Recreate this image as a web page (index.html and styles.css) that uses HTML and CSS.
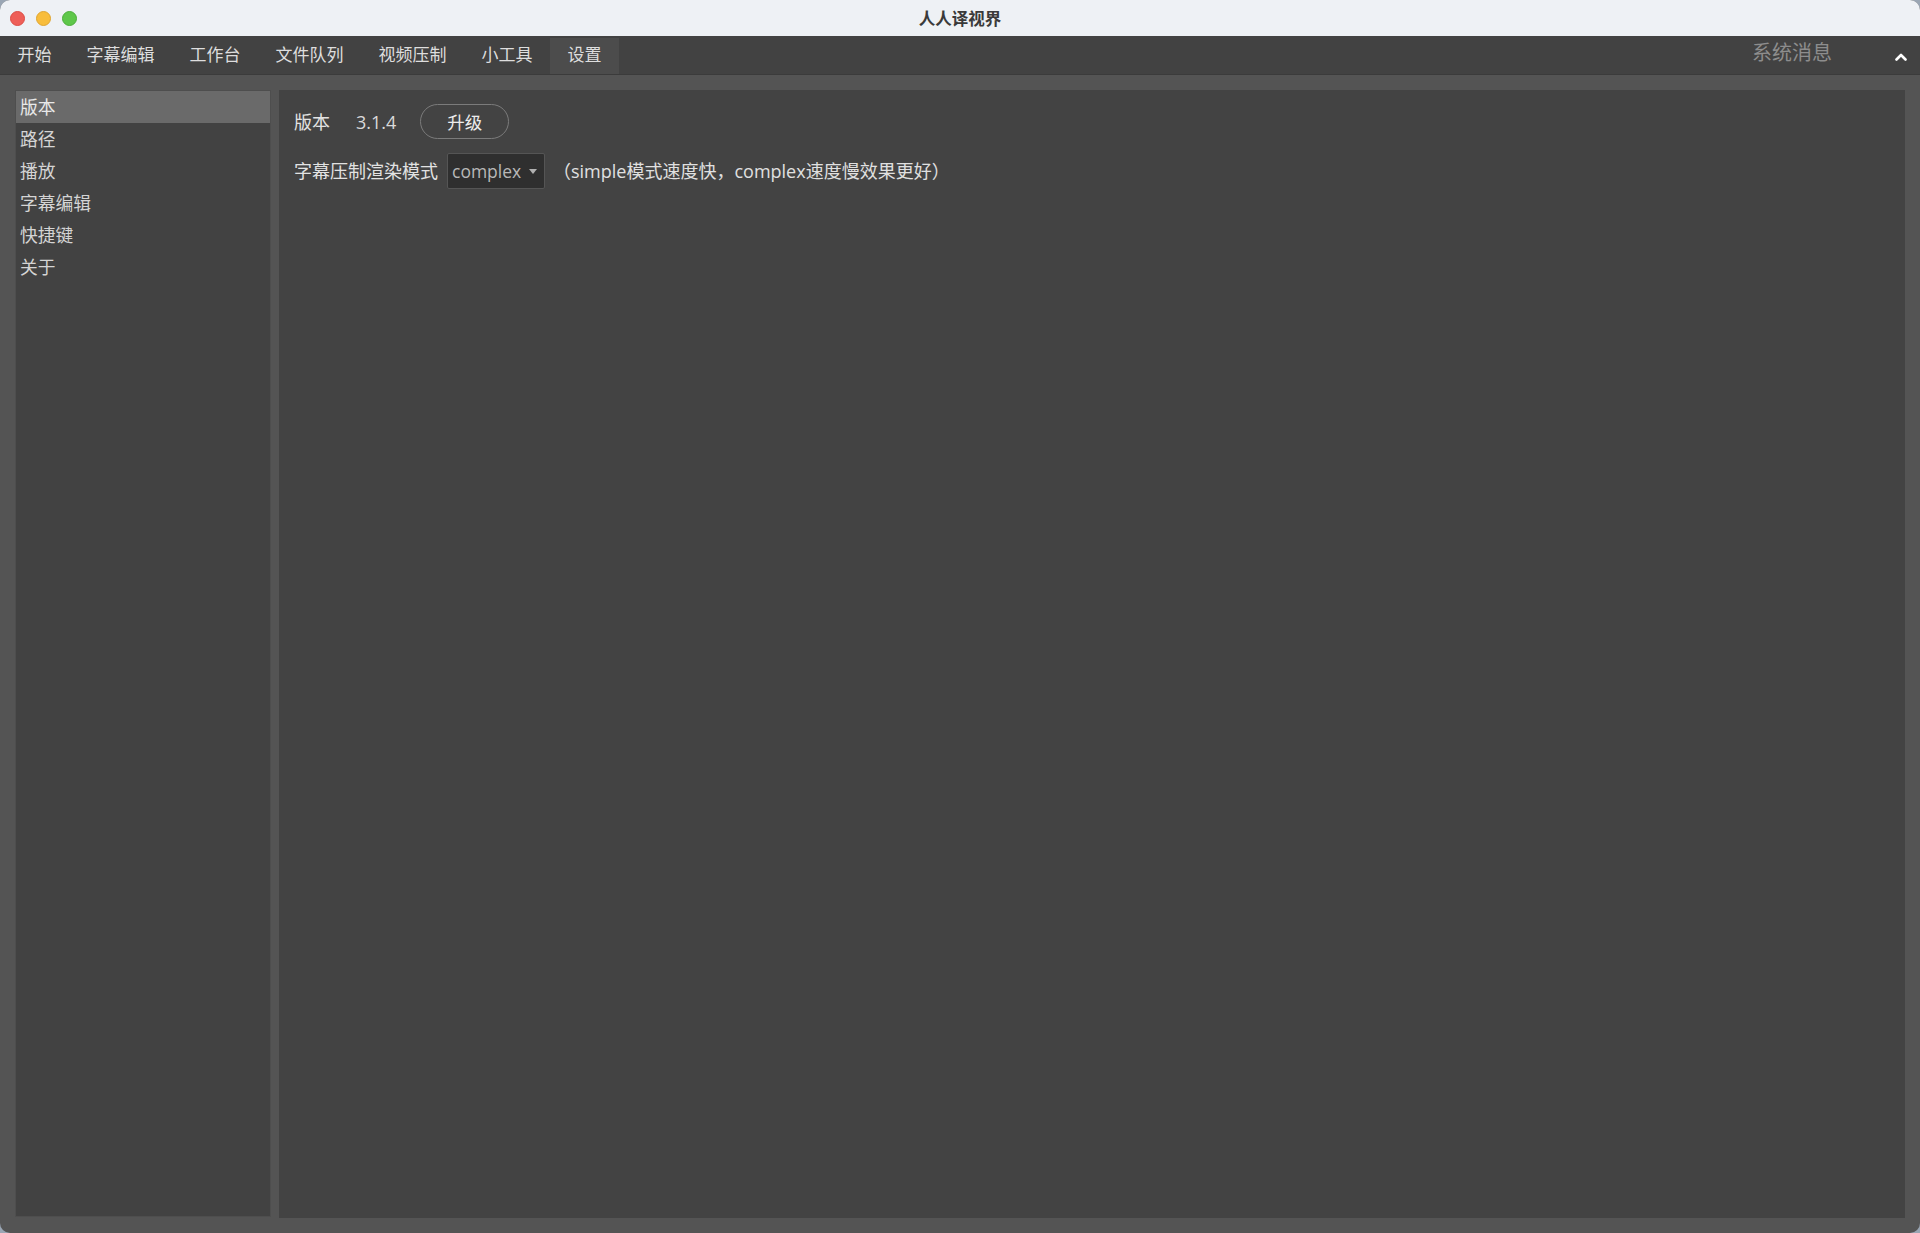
FILE: index.html
```html
<!DOCTYPE html>
<html lang="zh-CN">
<head>
<meta charset="utf-8">
<title>人人译视界</title>
<link rel="stylesheet" href="styles.css">
</head>
<body>
<div class="window">
  <header class="titlebar">
    <div class="lights">
      <span class="light red"></span>
      <span class="light yellow"></span>
      <span class="light green"></span>
    </div>
    <div class="title">人人译视界</div>
    <div class="spacer"></div>
  </header>
  <nav class="menubar">
    <div class="menu-item">开始</div>
    <div class="menu-item">字幕编辑</div>
    <div class="menu-item">工作台</div>
    <div class="menu-item">文件队列</div>
    <div class="menu-item">视频压制</div>
    <div class="menu-item">小工具</div>
    <div class="menu-item active">设置</div>
    <div class="menu-right">
      <span class="sys-msg">系统消息</span>
      <svg class="chevron" width="12" height="8" viewBox="0 0 12 8"><polyline points="1.5,6.5 6,2 10.5,6.5" fill="none" stroke="#ffffff" stroke-width="2.6" stroke-linecap="round" stroke-linejoin="round"/></svg>
    </div>
  </nav>
  <main class="body">
    <aside class="sidebar">
      <div class="side-item selected">版本</div>
      <div class="side-item">路径</div>
      <div class="side-item">播放</div>
      <div class="side-item">字幕编辑</div>
      <div class="side-item">快捷键</div>
      <div class="side-item">关于</div>
    </aside>
    <section class="content">
      <div class="row">
        <span class="label">版本</span>
        <span class="version">3.1.4</span>
        <button class="pill">升级</button>
      </div>
      <div class="row row2">
        <span class="label">字幕压制渲染模式</span>
        <div class="select"><span class="select-val">complex</span><span class="caret"></span></div>
        <span class="hint">（simple模式速度快，complex速度慢效果更好）</span>
      </div>
    </section>
  </main>
</div>
</body>
</html>
```
FILE: styles.css
```css
* { box-sizing: border-box; }
html, body { margin: 0; padding: 0; }
body {
  background: #9aa6b4;
  font-family: "Liberation Sans", "Noto Sans CJK SC", sans-serif;
  width: 1920px;
  height: 1233px;
  overflow: hidden;
}
.window {
  width: 1920px;
  height: 1233px;
  border-radius: 10px;
  overflow: hidden;
  display: flex;
  flex-direction: column;
  background: #545454;
}
.titlebar {
  height: 36px;
  flex: none;
  background: #eef1f5;
  display: grid;
  grid-template-columns: 1fr auto 1fr;
  align-items: center;
}
.lights {
  display: flex;
  gap: 11px;
  padding-left: 10px;
  align-items: center;
  padding-top: 1px;
}
.light {
  width: 15px;
  height: 15px;
  border-radius: 50%;
  display: block;
}
.red { background: #ee5f58; border: 1px solid #dc4c44; }
.yellow { background: #f8bd3c; border: 1px solid #e0a530; }
.green { background: #5ec74a; border: 1px solid #4cae3a; }
.title {
  font-family: "Noto Sans CJK SC", sans-serif;
  font-weight: 700;
  font-size: 16.5px;
  color: #3a3a3a;
  line-height: 20px;
}
.menubar {
  height: 39px;
  flex: none;
  background: #424242;
  border-bottom: 1px solid #3b3b3b;
  display: flex;
  align-items: stretch;
  padding-top: 2px;
}
.menu-item {
  padding: 0 17.5px;
  font-size: 17px;
  color: #dedede;
  display: flex;
  align-items: center;
  line-height: 20px;
  padding-bottom: 1px;
}
.menu-item.active { background: #4c4c4c; }
.menu-right {
  margin-left: auto;
  display: flex;
  align-items: center;
  padding-right: 13px;
  padding-bottom: 3px;
}
.sys-msg {
  font-size: 20px;
  color: #8d8d8d;
  line-height: 24px;
  position: relative;
  top: -2px;
}
.chevron {
  margin-left: 63px;
  margin-top: 5px;
  display: block;
}
.body {
  flex: 1;
  display: flex;
  gap: 8px;
  padding: 15px 15px 15px 15px;
  min-height: 0;
}
.sidebar {
  width: 256px;
  flex: none;
  background: #424242;
  border: 1px solid #4e4e4e;
  margin-bottom: 1px;
}
.side-item {
  height: 32px;
  display: flex;
  align-items: center;
  padding-left: 4px;
  padding-top: 2px;
  font-size: 17.75px;
  color: #d4d4d4;
  line-height: 20px;
}
.side-item.selected { background: #6a6a6a; color: #e8e8e8; }
.content {
  flex: 1;
  background: #434343;
  padding: 14px 15px;
  display: flex;
  flex-direction: column;
  gap: 14px;
}
.row {
  display: flex;
  align-items: center;
  font-family: "Open Sans", "Noto Sans CJK SC", sans-serif;
  font-size: 18px;
  color: #e2e2e2;
  line-height: 20px;
}
.version { margin-left: 26px; color: #dadada; }
.pill {
  margin-left: 24px;
  width: 89px;
  height: 35px;
  border-radius: 18px;
  border: 1px solid #7b7b7b;
  background: transparent;
  color: #ececec;
  font-family: "Noto Sans CJK SC", sans-serif;
  font-size: 17.5px;
  padding: 0;
  line-height: 20px;
  flex: none;
}
.select {
  margin-left: 9px;
  width: 98px;
  height: 36px;
  background: #2f2f2f;
  border: 1px solid #555555;
  border-radius: 2px;
  display: flex;
  align-items: center;
  padding-left: 4px;
  flex: none;
}
.select-val { color: #b8b8b8; font-size: 17.5px; }
.caret {
  margin-left: 8px;
  width: 0;
  height: 0;
  border-left: 4px solid transparent;
  border-right: 4px solid transparent;
  border-top: 5px solid #b0b0b0;
}
.hint { margin-left: 8px; color: #e0e0e0; }
```
